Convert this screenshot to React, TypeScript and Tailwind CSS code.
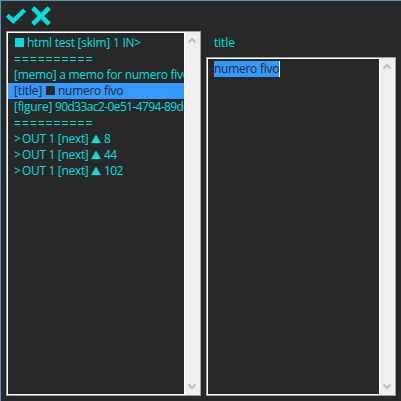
import React from "react";

function Square() {
  return <span className="mx-px mb-px inline-block h-[9px] w-[9px] shrink-0 bg-current" />;
}

function Triangle() {
  return (
    <svg width="10" height="9" viewBox="0 0 10 9" className="mb-px shrink-0" fill="currentColor">
      <path d="M5 0.5L10 9H0Z" />
    </svg>
  );
}

function Row({ children, selected = false }: { children: React.ReactNode; selected?: boolean }) {
  return (
    <div
      className={
        selected
          ? "flex h-4 items-center overflow-hidden bg-[#3399ff] pl-1.5 leading-4 whitespace-pre text-[#282828]"
          : "flex h-4 items-center overflow-hidden pl-1.5 leading-4 whitespace-pre"
      }
    >
      {children}
    </div>
  );
}

function Divider() {
  return (
    <Row>
      <span className="pt-0.5 leading-[14px] tracking-[1.1px]">==========</span>
    </Row>
  );
}

function Out({ value }: { value: string }) {
  return (
    <Row>
      <span className="w-2 shrink-0">&gt;</span>
      <span className="w-[69px] shrink-0 tracking-[-0.32px]">OUT 1 [next]</span>
      <Triangle />
      <span className="ml-[3px] tracking-[-0.6px]">{value}</span>
    </Row>
  );
}

function Scrollbar() {
  return (
    <div className="flex w-4 shrink-0 flex-col justify-between border-l border-white bg-[#f0f0f0] pt-[5px] pb-[5px] pl-[3px]">
      <svg width="8" height="7" viewBox="0 0 8 7" fill="none" stroke="#bfbfbf" strokeWidth="2">
        <path d="M0.5 5.5L4 2L7.5 5.5" />
      </svg>
      <svg width="8" height="7" viewBox="0 0 8 7" fill="none" stroke="#bfbfbf" strokeWidth="2">
        <path d="M0.5 1.5L4 5L7.5 1.5" />
      </svg>
    </div>
  );
}

export default function App() {
  return (
    <div className="flex h-[401px] w-[401px] flex-col overflow-hidden border-t border-l border-[#5597b5] bg-[#282828] font-['Open_Sans','Noto_Sans',sans-serif] text-[12px] text-[#00e0e0]">
      <div className="flex h-[30px] shrink-0 pt-[5px] pl-[5px]">
        <svg width="20" height="20" viewBox="0 0 20 20" fill="none" stroke="currentColor" strokeWidth="4.2">
          <path d="M1.3 9.3L7.2 15L18.5 4" />
        </svg>
        <svg width="20" height="20" viewBox="0 0 20 20" className="ml-[5px]" fill="none" stroke="currentColor" strokeWidth="4.6">
          <path d="M1.8 1.8L18.2 18.2M18.2 1.8L1.8 18.2" />
        </svg>
      </div>
      <div className="flex h-[365px] pl-[5px]">
        <div className="flex w-[195px] shrink-0 border border-[#a0a0a0]">
          <div className="w-[177px] shrink-0 border-y border-l border-white pt-0.5">
            <Row>
              <Square />
              <span className="ml-0.5 tracking-[-0.25px]">html test [skim] 1 IN&gt;</span>
            </Row>
            <Divider />
            <Row>
              <span className="tracking-[-0.27px]">[memo] a memo for numero fivo</span>
            </Row>
            <Row selected>
              <span className="w-[31px] shrink-0 tracking-[-0.15px]">[title]</span>
              <Square />
              <span className="ml-0.5 tracking-[-0.27px]">numero fivo</span>
            </Row>
            <Row>
              <span className="w-[41px] shrink-0 tracking-[-0.3px]">[figure]</span>
              <span className="tracking-[-0.6px]">90d33ac2-0e51-4794-89dc</span>
            </Row>
            <Divider />
            <Out value="8" />
            <Out value="44" />
            <Out value="102" />
          </div>
          <Scrollbar />
        </div>
        <div className="ml-[5px] flex w-[190px] shrink-0 flex-col">
          <div className="h-[26px] shrink-0 pt-[4px] pl-2 leading-4 tracking-[-0.1px]">title</div>
          <div className="flex min-h-0 flex-1 border border-[#a0a0a0]">
            <div className="w-[172px] shrink-0 border-y border-l border-white pt-0.5 pl-1.5">
              <div className="h-4 w-[66px] border-r border-white bg-[#3399ff] leading-4 tracking-[-0.27px] whitespace-nowrap text-[#282828]">
                numero fivo
              </div>
            </div>
            <Scrollbar />
          </div>
        </div>
      </div>
    </div>
  );
}
